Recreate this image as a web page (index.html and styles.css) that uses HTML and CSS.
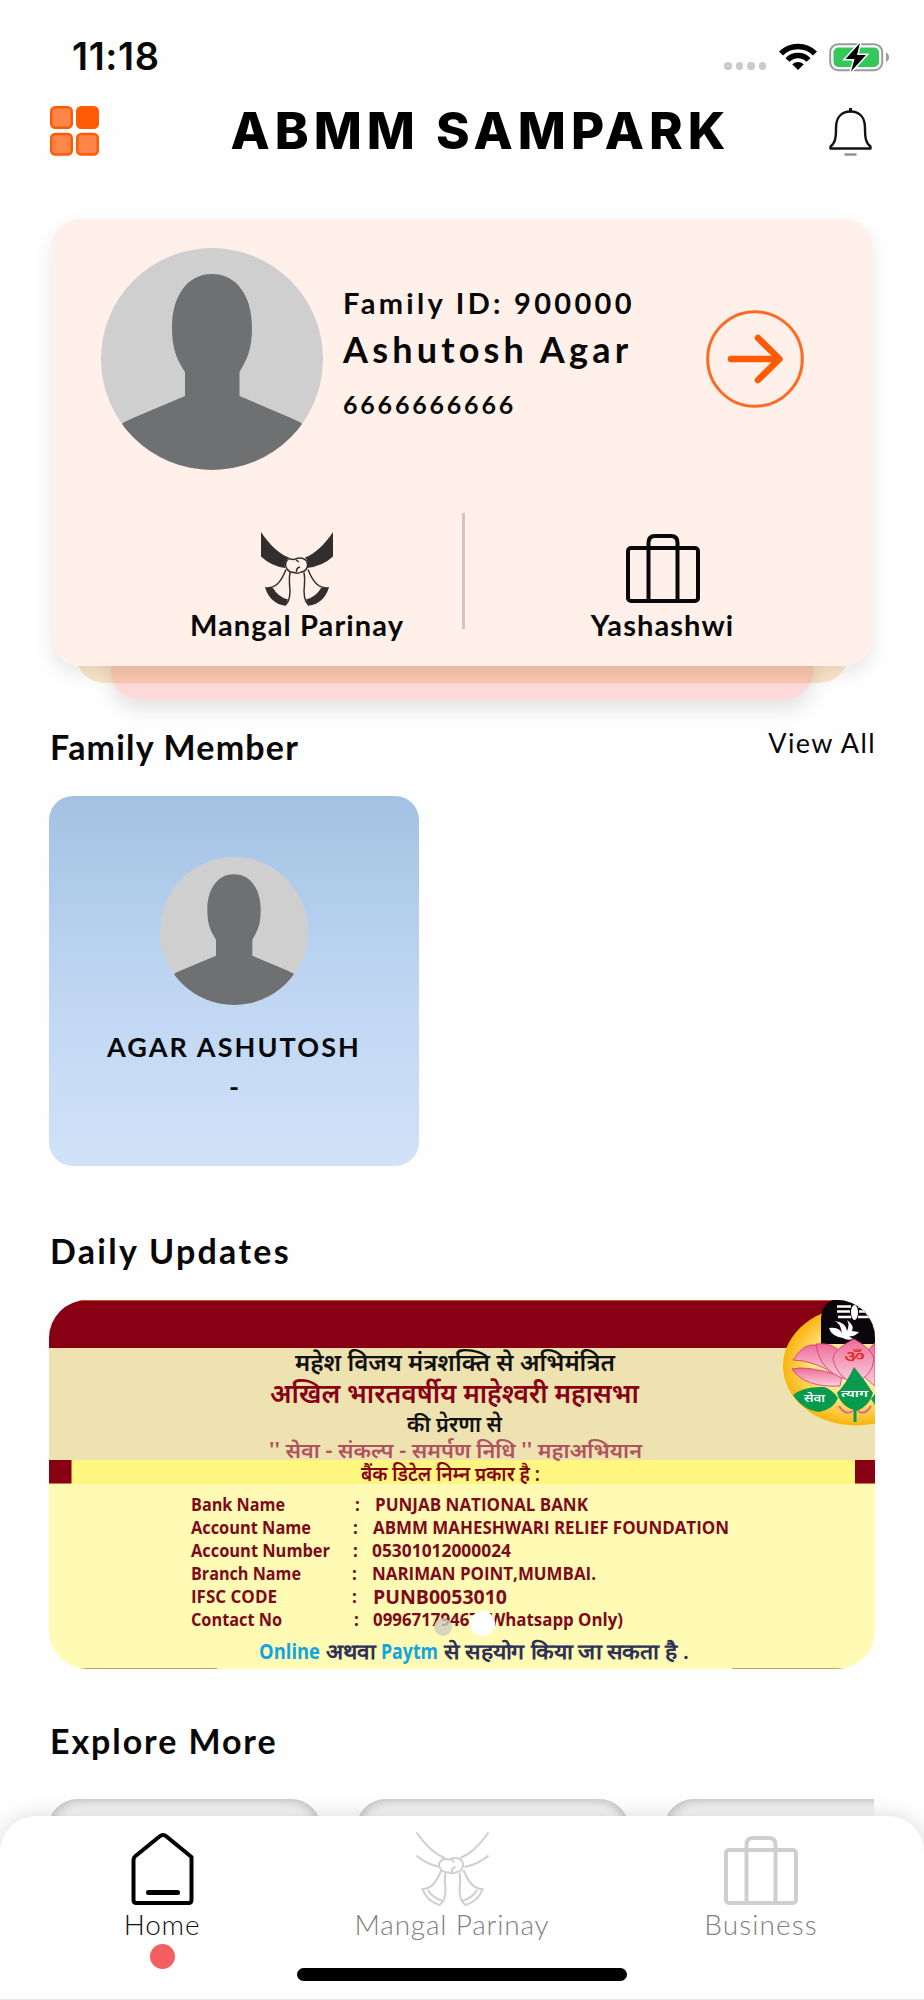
FILE: index.html
```html
<!DOCTYPE html>
<html lang="en">
    <head>
        <meta charset="utf-8">
        <title>ABMM Sampark</title>
        <link rel="stylesheet" href="styles.css">
    </head>
    <body>
        <!-- shared shapes -->
        <svg class="defs" width="0" height="0">
            <symbol id="person" viewBox="0 0 222 222">
                <clipPath id="round"><circle cx="111" cy="111" r="111"/></clipPath>
                <g clip-path="url(#round)">
                    <rect width="222" height="222" fill="#cfcfcf"/>
                    <path fill="#6f7072" d="M111 26C137 26 151 50 151 79C151 100 147 110 138.500 124V148L190 170Q198 173 204 178L222 222H0L18 178Q24 173 32 170L84 148V124C75 110 71 100 71 79C71 50 85 26 111 26Z"/>
                </g>
            </symbol>
            <symbol id="suitcase" viewBox="0 0 74 69">
                <g fill="none" stroke="currentColor" stroke-width="4">
                    <rect x="2" y="14" width="70" height="53" rx="3"/>
                    <path d="M22.500 67V9Q22.500 2 29 2H45Q51.500 2 51.500 9V67"/>
                </g>
            </symbol>
        </svg>

        <div class="statusBar">
            <span class="time">11:18</span>
            <div class="statusIcons">
                <div class="signal"><i></i><i></i><i></i><i></i></div>
                <svg width="38" height="28" viewBox="0 0 38 28">
                    <g fill="none" stroke="#000" stroke-width="5.500">
                        <path d="M2 10.500C11 1 27 1 36 10.500"/>
                        <path d="M8.500 17C14 11 24 11 29.500 17"/>
                    </g>
                    <path d="M19 27L13.200 21.300Q19 16.500 24.800 21.300Z"/>
                </svg>
                <svg class="battery" width="61" height="30" viewBox="0 0 61 30">
                    <rect x="1.200" y="2.200" width="52" height="26" rx="8" fill="none" stroke="#9b9b9b" stroke-width="2"/>
                    <path d="M57 10.500Q60 12 60 15.200T57 20Z" fill="#9b9b9b"/>
                    <rect x="4.500" y="5.500" width="45.500" height="19.500" rx="5" fill="#34c759"/>
                    <path d="M31 1L16.500 17H25.500L22 29.500L37 13H28Z" stroke="#fff" stroke-width="3" paint-order="stroke"/>
                </svg>
            </div>
        </div>

        <div class="header">
            <svg width="49" height="50" viewBox="0 0 49 50">
                <g fill="#ff8649" stroke="#ff5a06" stroke-width="2.500">
                    <rect x="1.250" y="1.250" width="20.500" height="20.500" rx="4"/>
                    <rect x="27.250" y="1.250" width="20.500" height="20.500" rx="4" fill="#ff5a06"/>
                    <rect x="1.250" y="28" width="20.500" height="20.500" rx="4"/>
                    <rect x="27.250" y="28" width="20.500" height="20.500" rx="4"/>
                </g>
            </svg>
            <h1>ABMM SAMPARK</h1>
            <svg width="43" height="50" viewBox="0 0 43 50">
                <path fill="none" stroke="#111" stroke-width="2.400" stroke-linejoin="round" d="M1.500 42.500V40.500C6.500 37 7 31 7 22C7 12 12 5.500 21.500 5.500S36 12 36 22C36 31 36.500 37 41.500 40.500V42.500Z"/>
                <path stroke="#111" stroke-width="3" d="M21.500 2V6"/>
                <path stroke="#8e8e8e" stroke-width="2.400" d="M15.500 48.500H27.500"/>
            </svg>
        </div>

        <div class="profile">
            <div class="layer beige"></div>
            <div class="layer pink"></div>
            <div class="profileCard">
                <div class="profileTop">
                    <svg width="222" height="222"><use href="#person"/></svg>
                    <div class="profileText">
                        <div class="familyId">Family ID: 900000</div>
                        <div class="name">Ashutosh Agar</div>
                        <div class="phone">6666666666</div>
                    </div>
                    <svg class="go" width="98" height="98" viewBox="0 0 98 98" fill="none" stroke="#ff5a06">
                        <circle cx="49" cy="49" r="47.300" stroke="#ff6a22" stroke-width="3"/>
                        <path stroke-width="6.500" stroke-linecap="round" stroke-linejoin="round" d="M25 49H73M52 28L73.500 49L52 70"/>
                    </svg>
                </div>
                <div class="actions">
                    <div class="action">
                        <svg width="72" height="74" viewBox="0 0 72 74">
                            <path fill="#322e2e" d="M0 0C8 12 18 22 28 25.500Q23 29 24 36Q10 34 0 24.500ZM72 0C64 12 54 22 44 25.500Q48 29 46 36Q62 34 72 24.500ZM5 56H12Q17 65 27 67.500L24.500 73Q10 71 5 56ZM67 56H60Q55 65 45 67.500L47.500 73Q62 71 67 56Z"/>
                            <g fill="none" stroke="#322e2e" stroke-width="1.500">
                                <path d="M28 26.500Q32 28 34.500 27Q38 25.500 42 26.500Q47 28 46.500 34Q45 40 40 40Q37 42 33 40.500Q29 41 26 37Q22 31 28 26.500M35 28L38 30M35.500 40Q35 36 39 35"/>
                                <path d="M25 37.500C20 50 15 56 5 56Q10 71 24.500 73C29 69 29.500 60 28.500 52Q28 45 29 40.500M47 37.500C52 50 57 56 67 56Q62 71 47.500 73C43 69 42.500 60 43.500 52Q44 45 43 40.500"/>
                            </g>
                        </svg>
                        <span>Mangal Parinay</span>
                    </div>
                    <div class="divider"></div>
                    <div class="action second">
                        <svg class="caseIcon" width="74" height="69"><use href="#suitcase"/></svg>
                        <span>Yashashwi</span>
                    </div>
                </div>
            </div>
        </div>

        <div class="sectionHead">
            <h2 class="family">Family Member</h2>
            <a class="viewAll">View All</a>
        </div>
        <div class="member">
            <svg width="148" height="148"><use href="#person"/></svg>
            <div class="memberName">AGAR ASHUTOSH</div>
            <div class="relation">-</div>
        </div>

        <h2 class="daily">Daily Updates</h2>
        <div class="banner">
            <svg width="826" height="369" viewBox="49 1300 826 369">
                <rect x="49" y="1300" width="826" height="369" fill="#fffab4"/>
                <rect x="49" y="1300" width="826" height="49" fill="#870014"/>
                <rect x="49" y="1300" width="826" height="1" fill="#c8562c"/>
                <rect x="49" y="1348" width="826" height="112" fill="#eee2b0"/>
                <rect x="49" y="1460" width="826" height="24" fill="#fff780"/>
                <rect x="49" y="1460" width="22.500" height="23.500" fill="#870014"/>
                <rect x="855" y="1460" width="20" height="23.500" fill="#870014"/>
                <path d="M80 1668.500H217M732 1668.500H846" stroke="#c9a04c"/>

                <g class="hindi">
                    <text x="295" y="1371" font-size="23.500" textLength="320" lengthAdjust="spacingAndGlyphs" fill="#111">महेश विजय मंत्रशक्ति से अभिमंत्रित</text>
                    <text x="270" y="1403" font-size="27" textLength="369" lengthAdjust="spacingAndGlyphs" fill="#870014">अखिल भारतवर्षीय माहेश्वरी महासभा</text>
                    <text x="407" y="1432" font-size="22" textLength="95" lengthAdjust="spacingAndGlyphs" fill="#111">की प्रेरणा से</text>
                    <text x="269" y="1457.500" font-size="21" textLength="373" lengthAdjust="spacingAndGlyphs" fill="#b0525f">'' सेवा - संकल्प - समर्पण निधि '' महाअभियान</text>
                    <text x="361" y="1480.500" font-size="20" textLength="179" lengthAdjust="spacingAndGlyphs" fill="#870014">बैंक डिटेल निम्न प्रकार है :</text>
                </g>

                <g class="bank">
                    <text x="191" y="1511" textLength="94" lengthAdjust="spacingAndGlyphs">Bank Name</text>
                    <text x="355" y="1511">:</text>
                    <text x="375" y="1511" textLength="213" lengthAdjust="spacingAndGlyphs">PUNJAB NATIONAL BANK</text>
                    <text x="191" y="1534" textLength="120" lengthAdjust="spacingAndGlyphs">Account Name</text>
                    <text x="353" y="1534">:</text>
                    <text x="373" y="1534" textLength="356" lengthAdjust="spacingAndGlyphs">ABMM MAHESHWARI RELIEF FOUNDATION</text>
                    <text x="191" y="1556.500" textLength="139" lengthAdjust="spacingAndGlyphs">Account Number</text>
                    <text x="353" y="1556.500">:</text>
                    <text x="372" y="1556.500" textLength="139" lengthAdjust="spacingAndGlyphs">05301012000024</text>
                    <text x="191" y="1579.500" textLength="110" lengthAdjust="spacingAndGlyphs">Branch Name</text>
                    <text x="352" y="1579.500">:</text>
                    <text x="372" y="1579.500" textLength="224" lengthAdjust="spacingAndGlyphs">NARIMAN POINT,MUMBAI.</text>
                    <text x="191" y="1602.500" textLength="86" lengthAdjust="spacingAndGlyphs">IFSC CODE</text>
                    <text x="352" y="1602.500">:</text>
                    <text class="ifsc" x="373" y="1604" textLength="134" lengthAdjust="spacingAndGlyphs">PUNB0053010</text>
                    <text x="191" y="1625.500" textLength="91" lengthAdjust="spacingAndGlyphs">Contact No</text>
                    <text x="354" y="1625.500">:</text>
                    <text x="373" y="1625.500" textLength="250" lengthAdjust="spacingAndGlyphs">09967179467 (Whatsapp Only)</text>
                </g>
                <g class="pay">
                    <text class="cyan" x="259" y="1659" textLength="61" lengthAdjust="spacingAndGlyphs">Online</text>
                    <text x="326" y="1659" textLength="49" lengthAdjust="spacingAndGlyphs">अथवा</text>
                    <text class="cyan" x="381" y="1659" textLength="57" lengthAdjust="spacingAndGlyphs">Paytm</text>
                    <text x="444" y="1659" textLength="245" lengthAdjust="spacingAndGlyphs">से सहयोग किया जा सकता है .</text>
                </g>

                <!-- lotus emblem -->
                <radialGradient id="sun"><stop offset="0" stop-color="#fff6cf"/><stop offset="0.600" stop-color="#ffe27c"/><stop offset="1" stop-color="#f9b40d"/></radialGradient>
                <linearGradient id="petal" x1="0" y1="0" x2="0" y2="1"><stop offset="0" stop-color="#ef6b9b"/><stop offset="1" stop-color="#fbd0dc"/></linearGradient>
                <ellipse cx="856" cy="1366" rx="73" ry="59.500" fill="url(#sun)"/>
                <path d="M821 1344V1318Q822 1302 836 1299H875V1344Z" fill="#08060a"/>
                <path d="M837 1306.500H851M837 1311.500H850M838 1317H851M858 1306.500H864M859 1311.500H867M858 1317H871" stroke="#fff" stroke-width="2.500"/>
                <ellipse cx="854.500" cy="1312.500" rx="3.500" ry="7.500" fill="#fff"/>
                <path d="M829 1328Q839 1327 842 1333Q840 1322 834 1321Q846 1322 847 1331Q850 1325 847 1320Q855 1326 852 1331L859 1332Q855 1337 849 1336L853 1339Q847 1341 843 1338Q831 1336 829 1328Z" fill="#fff"/>
                <g fill="url(#petal)" stroke="#c73b70" stroke-width="0.800">
                    <path d="M815 1345Q804 1343 793 1360Q812 1360 835 1374L843 1362Q834 1345 815 1345Z"/>
                    <path d="M792 1369Q806 1365 842 1376L840 1386Q805 1388 792 1369Z"/>
                    <path d="M816 1344Q840 1341 848 1366L846 1379Q820 1372 816 1344Z"/>
                    <path d="M875 1343Q864 1350 863 1376L875 1386Z"/>
                    <path d="M854 1339Q832 1350 833 1360Q838 1378 854 1383Q872 1377 874 1359Q872 1349 854 1339Z"/>
                </g>
                <text x="844" y="1362" font-size="16" class="hindi" textLength="21" lengthAdjust="spacingAndGlyphs" fill="#e22d25">ॐ</text>
                <g fill="#079b4d">
                    <path d="M793 1395Q804 1386 824 1387Q833 1390 838 1398Q834 1409 819 1412Q803 1410 793 1395Z"/>
                    <path d="M854 1367Q865 1380 873 1393Q870 1405 857 1411Q841 1407 837 1393Q846 1384 854 1367Z"/>
                    <path d="M871 1399L875 1394V1405Z"/>
                    <path d="M855 1405V1422" stroke="#079b4d" stroke-width="3"/>
                </g>
                <path d="M839 1406Q845 1416 853 1411M871 1406Q865 1416 858 1411" fill="none" stroke="#d66a91" stroke-width="2"/>
                <text class="hindi" x="804" y="1402" font-size="11" fill="#fff" textLength="21" lengthAdjust="spacingAndGlyphs">सेवा</text>
                <text class="hindi" x="841" y="1397" font-size="10" fill="#fff" textLength="27" lengthAdjust="spacingAndGlyphs">त्याग</text>
            </svg>
            <span class="dot"></span>
            <span class="dot current"></span>
        </div>

        <h2 class="explore">Explore More</h2>
        <div class="tiles">
            <div class="tile"></div>
            <div class="tile"></div>
            <div class="tile"></div>
        </div>

        <div class="navBar">
            <div class="navItem home">
                <svg width="63" height="74" viewBox="0 0 63 74" fill="none" stroke="#000">
                    <path stroke-width="4" stroke-linejoin="round" d="M28.500 4.500Q32 1.500 35.500 4.500L60.500 25V68Q60.500 71 57.500 71H5.500Q2.500 71 2.500 68V28Q2.500 25.500 4.500 24Z"/>
                    <path stroke-width="5" stroke-linecap="round" d="M17.500 60.500H46.500"/>
                </svg>
                <span>Home</span>
                <i class="active"></i>
            </div>
            <div class="navItem">
                <svg width="73" height="74" viewBox="0 0 72 74" fill="none" stroke="#cfcfcf" stroke-width="2">
                    <path d="M0 .5C8 12 18 22 28 26M0 23.500Q10 32 22 34.500M72 .5C64 12 54 22 44 26M72 23.500Q62 32 48 35"/>
                    <path d="M28 26.500Q32 28 34.500 27Q38 25.500 42 26.500Q47 28 46.500 34Q45 40 40 40Q37 42 33 40.500Q29 41 26 39Q18 32 28 26.500M35 28L38 30M35.500 40Q35 36 39 35"/>
                    <path d="M25 38C20 50 15 57 6 57Q10 69 23 73C29 69 29.500 60 28.500 52Q28 45 29 41M47 38C52 50 57 57 66 57Q62 69 49 73C43 69 42.500 60 43.500 52Q44 45 43 41M11.500 58Q15 65 26 69M60.500 58Q57 65 46 69"/>
                </svg>
                <span>Mangal Parinay</span>
            </div>
            <div class="navItem business">
                <svg width="74" height="74" viewBox="0 -4 74 74"><use href="#suitcase" width="74" height="69"/></svg>
                <span>Business</span>
            </div>
            <div class="homeBar"></div>
        </div>
    </body>
</html>
```
FILE: styles.css
```css
*{
    box-sizing: border-box;
}
body{
    margin: 0;
    position: relative;
    width: 924px;
    height: 2000px;
    overflow: hidden;
    background: #fefefe;
    color: #080808;
    font-family: Lato, 'Noto Sans', sans-serif;
    font-weight: 700;
}
svg{
    display: block;
    flex: none;
}
.defs{
    position: absolute;
}

/* status bar */
.statusBar{
    height: 87px;
    padding: 26px 34px 0 72px;
    display: flex;
    justify-content: space-between;
}
.time{
    font-family: Inter, sans-serif;
    font-size: 38px;
    font-weight: 600;
    line-height: 61px;
    letter-spacing: 0.6px;
}
.statusIcons{
    display: flex;
    align-items: center;
    height: 61px;
}
.signal{
    display: flex;
    gap: 4px;
    margin: 19px 13px 0 0;
}
.signal i{
    width: 7.5px;
    height: 7.5px;
    border-radius: 50%;
    background: #cacaca;
}
.battery{
    margin-left: 12px;
}

/* title row */
.header{
    height: 88px;
    padding: 0 52px 0 50px;
    display: flex;
    align-items: center;
    justify-content: space-between;
}
.header h1{
    margin: 0;
    padding-left: 33px;
    font-family: Inter, sans-serif;
    font-size: 51px;
    line-height: 60px;
    font-weight: 800;
    letter-spacing: 5px;
    color: #000;
}

/* profile */
.profile{
    position: relative;
    margin: 44px 52px 0;
    height: 447px;
}
.profileCard{
    position: relative;
    height: 447px;
    border-radius: 28px;
    background: #fff0e9;
    box-shadow: 0 8px 18px rgba(0, 0, 0, 0.09);
}
.layer{
    position: absolute;
    height: 100px;
    border-radius: 28px;
}
.layer.beige{
    left: 24px;
    right: 24px;
    bottom: -17px;
    background: #fde7ca;
}
.layer.pink{
    left: 59px;
    right: 59px;
    bottom: -34px;
    background: linear-gradient(#fac8ae 83px, #fdd9da 83px);
    box-shadow: 0 8px 20px rgba(0, 0, 0, 0.12);
}
.profileTop{
    display: flex;
    padding: 29px 68px 0 49px;
}
.profileText{
    padding: 35px 0 0 20px;
    white-space: nowrap;
}
.familyId{
    font-size: 29px;
    line-height: 40px;
    letter-spacing: 3.3px;
}
.name{
    margin-top: 3px;
    font-size: 36px;
    line-height: 46px;
    letter-spacing: 4.2px;
}
.phone{
    margin-top: 12px;
    font-size: 25px;
    line-height: 40px;
    letter-spacing: 2.8px;
}
.go{
    margin: 62px 0 0 auto;
}
.actions{
    display: flex;
    margin-top: 43px;
}
.action{
    flex: 1;
    display: flex;
    flex-direction: column;
    align-items: center;
    padding: 19px 0 0 80px;
    font-size: 29px;
    line-height: 38px;
    letter-spacing: 1.1px;
}
.action.second{
    flex: none;
    width: 407px;
    padding: 19px 12px 0 0;
}
.caseIcon{
    margin: 2px 0 3px;
}
.divider{
    width: 3px;
    height: 116px;
    background: #d1c5bf;
}

/* sections */
h2{
    margin: 0;
    padding: 1px 0 0 1px;
    font-size: 34px;
    line-height: 39px;
    letter-spacing: 2.3px;
}
h2.family{
    letter-spacing: 1.2px;
}
.sectionHead{
    display: flex;
    justify-content: space-between;
    margin: 60px 48px 0 49px;
}
.viewAll{
    margin-top: -3px;
    height: 40px;
    font-size: 27px;
    line-height: 40px;
    font-weight: 400;
    letter-spacing: 1.4px;
}
.member{
    margin: 30px 0 0 49px;
    width: 370px;
    height: 370px;
    padding-top: 61px;
    border-radius: 24px;
    background: linear-gradient(#a5c1e1, #b5d0ef 35%, #bed5f2 50%, #d1e2f8);
    display: flex;
    flex-direction: column;
    align-items: center;
}
.memberName{
    margin-top: 24px;
    font-size: 27px;
    line-height: 36px;
    letter-spacing: 2.1px;
}
.relation{
    margin-top: 2px;
    font-size: 27px;
    line-height: 40px;
}
.daily{
    margin: 64px 49px 30px;
}
.banner{
    position: relative;
    margin: 0 49px;
    height: 369px;
    border-radius: 38px;
    overflow: hidden;
}
.hindi{
    font-family: 'Noto Sans', 'Noto Sans Devanagari', sans-serif;
    font-weight: 600;
}
.bank{
    font-family: 'Open Sans', sans-serif;
    font-size: 17px;
    font-weight: 700;
    fill: #7d0a1c;
}
.ifsc{
    font-size: 19px;
}
.pay{
    font-family: 'Open Sans', sans-serif;
    font-size: 21px;
    font-weight: 600;
    fill: #2e3157;
}
.pay .cyan{
    font-weight: 700;
    fill: #12a4e0;
}
.dot{
    position: absolute;
    left: 385px;
    top: 318px;
    width: 18px;
    height: 18px;
    border-radius: 50%;
    background: rgba(205, 205, 190, 0.8);
}
.dot.current{
    left: 421px;
    top: 311px;
    width: 25px;
    height: 25px;
    background: #fff;
}
.explore{
    margin: 51px 49px 39px;
    letter-spacing: 1.9px;
}
.tiles{
    display: flex;
    gap: 35px;
    margin: 0 50px 0 48px;
    overflow: hidden;
}
.tile{
    flex: none;
    width: 273px;
    height: 200px;
    border-radius: 30px;
    background: #f6f6f6;
    box-shadow: inset 0 1px 12px rgba(0, 0, 0, 0.3);
}

/* bottom navigation */
.navBar{
    position: absolute;
    left: 0;
    right: 0;
    bottom: 0;
    height: 184px;
    display: grid;
    grid-template-columns: 324px 256px 362px;
    border-radius: 36px 36px 0 0;
    background: #fff;
    border-bottom: 1px solid #e8e8e8;
    box-shadow: 0 0 20px rgba(0, 0, 0, 0.15);
}
.navItem{
    display: flex;
    flex-direction: column;
    align-items: center;
    padding-top: 16px;
    font-size: 28px;
    line-height: 40px;
    font-weight: 300;
    letter-spacing: 0.8px;
    color: #808080;
}
.navItem span{
    margin-top: -2px;
}
.navItem svg{
    color: #cfcfcf;
}
.home{
    color: #111;
}
.business{
    letter-spacing: 1.1px;
}
.active{
    width: 25px;
    height: 25px;
    border-radius: 50%;
    background: #f45f60;
}
.homeBar{
    position: absolute;
    left: 297px;
    bottom: 18px;
    width: 330px;
    height: 13px;
    border-radius: 7px;
    background: #000;
}
```
